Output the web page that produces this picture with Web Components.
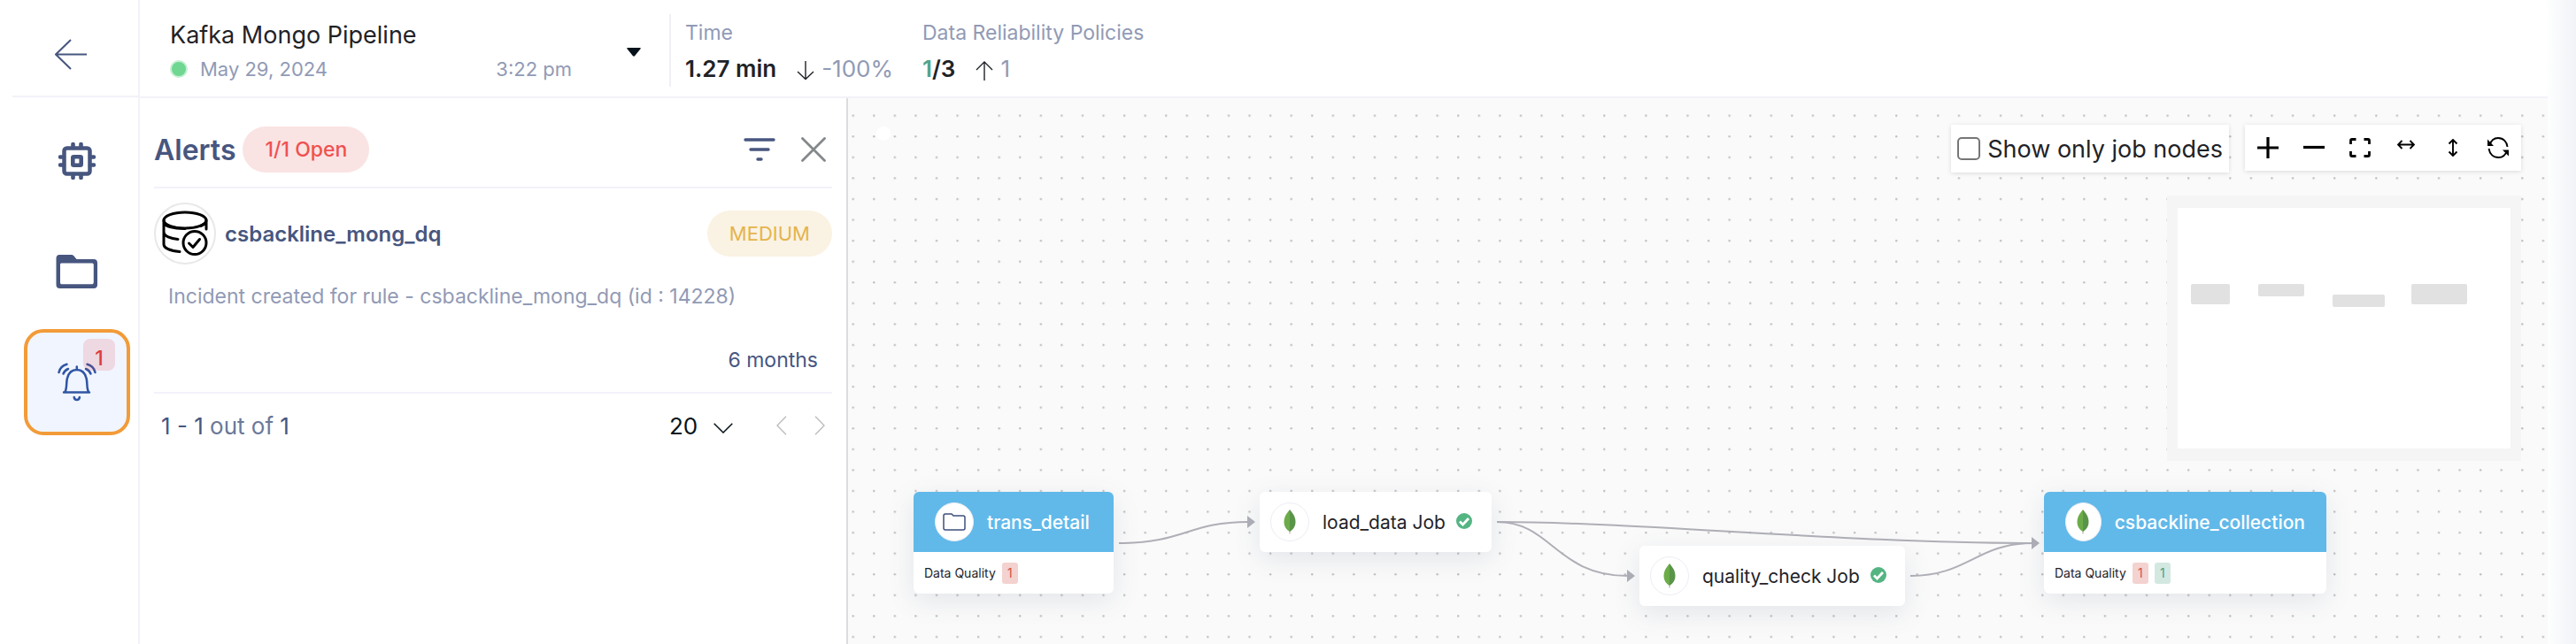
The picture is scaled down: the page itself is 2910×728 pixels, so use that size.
<!DOCTYPE html>
<html lang="en">
<head>
<meta charset="utf-8">
<title>Kafka Mongo Pipeline</title>
<style>
  html, body { margin: 0; }
  body {
    font-family: Inter, "Liberation Sans", sans-serif;
    background: #fff;
    color: #1f2328;
    --ink: #47567f;
    --muted: #919ab5;
    --line: #f2f2f9;
  }
</style>
</head>
<body>
<app-shell>
  <side-rail slot="rail">
    <rail-item icon="chip" label="Compute"></rail-item>
    <rail-item icon="folder" label="Assets"></rail-item>
    <rail-item icon="bell" label="Alerts" count="1" active></rail-item>
  </side-rail>
  <run-header slot="header">
    <metric-stat label="Time" trend="down" delta="-100%">1.27 min</metric-stat>
    <metric-stat label="Data Reliability Policies" trend="up" delta="1"><span style="color:#4fa58c">1</span>/3</metric-stat>
  </run-header>
  <alerts-panel slot="panel">
    <alert-card name="csbackline_mong_dq" level="MEDIUM" age="6 months">Incident created for rule - csbackline_mong_dq (id : 14228)</alert-card>
  </alerts-panel>
  <flow-canvas slot="canvas">
    <flow-node x="74" y="445" w="226" kind="data" icon="folderline" name="trans_detail" failed="1"></flow-node>
    <flow-node x="465" y="445" w="262" kind="job" icon="leaf" name="load_data Job"></flow-node>
    <flow-node x="894" y="506" w="300" kind="job" icon="leaf" name="quality_check Job"></flow-node>
    <flow-node x="1351" y="445" w="319" kind="data" icon="leaf" name="csbackline_collection" failed="1" passed="1"></flow-node>
  </flow-canvas>
</app-shell>

<script>
const ICONS = {
  back: [36, 36, '<path d="M36 17.5H1M18 1 1 17.5 18 34" fill="none" stroke="#47567f" stroke-width="2"/>'],
  chip: [42, 42, '<g fill="none" stroke="#47567f"><rect x="6.500" y="6.500" width="29" height="29" rx="3" stroke-width="4.500"/><path d="M16.500 2v4M25.500 2v4M16.500 36v4M25.500 36v4M2 16.500h4M2 25.500h4M36 16.500h4M36 25.500h4" stroke-width="4.600" stroke-linecap="round"/><rect x="16.300" y="16.300" width="9.400" height="9.400" rx="1" stroke-width="4.600"/></g>'],
  folder: [48, 38, '<path fill="#47567f" fill-rule="evenodd" d="M4 0h13c2 0 3 .600 4 2l2.500 3H43c2.500 0 4 1.500 4 4v25c0 2.500-1.500 4-4 4H4.500C2 38 .500 36.500.500 34V4C.500 1.500 2 0 4 0zM7 9.500c-1.500 0-2 .500-2 2V31c0 1.500.500 2.300 2 2.300h33.500c1.500 0 2.300-.800 2.300-2.300V11.500c0-1.500-.800-2-2.300-2z"/>'],
  bell: [44, 44, '<g fill="none" stroke="#2f55a4" stroke-width="2.500" stroke-linecap="round"><path d="M7 33.500h29M8.500 33C11 28 9.500 22 11 17.500 12.500 11.500 16.500 8 21.800 8S31 11.500 32.500 17.500C34 22 32.500 28 35 33M21.800 4.500V8M18.700 39c.500 4 5.700 4 6.200 0"/><path d="M1.500 11C2.500 6.500 6 3 10.500 1.800M6.500 12.500C7.500 9.800 9.500 8 12 7M42.500 11C41.500 6.500 38 3 33.500 1.800M37.500 12.500C36.500 9.800 34.500 8 32 7"/></g>'],
  caret: [16, 10, '<path d="M1 0h14c1 0 1 .800.500 1.300L9 9.300c-.500.600-1.500.600-2 0L.500 1.300C0 .800 0 0 1 0z" fill="#07131a"/>'],
  down: [20, 22, '<path d="M10 0v20M1 12l9 8.500L19 12" fill="none" stroke="#1f2328" stroke-width="1.400"/>'],
  up: [20, 22, '<path d="M10 22V1M1 10l9-9 9 9" fill="none" stroke="#1f2328" stroke-width="1.400"/>'],
  filter: [36, 26, '<path d="M2 2h32M8 13h20M16 24h4" fill="none" stroke="#47567f" stroke-width="3.400" stroke-linecap="round"/>'],
  close: [28, 28, '<path d="M1.500 1.500l25 25M26.500 1.500l-25 25" fill="none" stroke="#84888a" stroke-width="2.800" stroke-linecap="round"/>'],
  dbcheck: [52, 52, '<g fill="none" stroke="#000" stroke-width="3" stroke-linecap="round" stroke-linejoin="round"><ellipse cx="26" cy="11" rx="24" ry="9"/><path d="M2 11v27c0 4.500 8 7.500 18 8.500M2 13c0 5 11 7.500 24 7.500M2 24c0 5 8 8 16 8.500M50 11v10M43.500 17.500c3-1 5.500-3 6.500-5"/><circle cx="37" cy="36.500" r="13"/><path d="M30.500 37l4.500 4.500 7.500-9"/></g>'],
  chevdown: [22, 12, '<path d="M.700.700 11 11 21.300.700" fill="none" stroke="#07131a" stroke-width="1.500"/>'],
  prev: [12, 22, '<path d="M11 .700 1 11l10 10.300" fill="none" stroke="#bdbdbd" stroke-width="1.400"/>'],
  next: [12, 22, '<path d="M1 .700 11 11 1 21.300" fill="none" stroke="#bdbdbd" stroke-width="1.400"/>'],
  plus: [24, 24, '<path d="M12 0v24M0 12h24" stroke="#000" stroke-width="3.200"/>'],
  minus: [24, 24, '<path d="M0 11.500h24" stroke="#000" stroke-width="3.200"/>'],
  fit: [24, 22, '<path d="M7.500 1.500H3C2 1.500 1.500 2 1.500 3v4M16.500 1.500H21c1 0 1.500.500 1.500 1.500v4M7.500 20.500H3c-1 0-1.500-.500-1.500-1.500v-4M16.500 20.500H21c1 0 1.500-.500 1.500-1.500v-4" fill="none" stroke="#000" stroke-width="2.800"/>'],
  horiz: [20, 20, '<path d="M1 6.500h18M5.500 2 1 6.500 5.500 11M14.500 2 19 6.500 14.500 11" fill="none" stroke="#000" stroke-width="1.900"/>'],
  vert: [20, 20, '<path d="M11 1v18M6.500 5.500 11 1l4.500 4.500M6.500 14.500 11 19l4.500-4.500" fill="none" stroke="#000" stroke-width="1.900"/>'],
  refresh: [24, 24, '<path d="M2.500 9C4 4 7.500 1 12 1c6 0 10 4.500 10.500 10M22 15.500C20.500 20 17 23 12.500 23 6.500 23 2.500 19 1.500 13" fill="none" stroke="#000" stroke-width="1.900"/><path d="M0 2.500V10h7zM24 21.500V14.500h-7z"/>'],
  folderline: [26, 20, '<path d="M1 17V3c0-1.200.800-2 2-2h7l2 2h11c1.200 0 2 .800 2 2v12c0 1.200-.800 2-2 2H3c-1.200 0-2-.800-2-2z" fill="none" stroke="#3f4f7c" stroke-width="1.500"/>'],
  leaf: [14, 28, '<path d="M7 22v5.500" stroke="#b9b39a" stroke-width="1.200"/><path d="M7 0C4 4 .500 7.500.500 14c0 5 2.500 8.500 6.500 11z" fill="#6cac48"/><path d="M7 0c3 4 6.500 7.500 6.500 14 0 5-2.500 8.500-6.500 11z" fill="#599449"/>'],
  ok: [18, 18, '<circle cx="9" cy="9" r="9" fill="#54b583"/><path d="M4 9.500l3.500 3.500L14 6" fill="none" stroke="#fff" stroke-width="2.800"/>']
};

// Registers an element whose open shadow root is rendered from its attributes.
function element(tag, css, html, ready) {
  customElements.define(tag, class extends HTMLElement {
    constructor() { super(); this.attachShadow({ mode: 'open' }); }
    connectedCallback() {
      const attr = n => this.getAttribute(n) || '';
      this.shadowRoot.innerHTML = `<style>*{box-sizing:border-box}button{font:inherit;border:0;background:none;padding:0;display:flex;cursor:pointer}${css}</style>${html(attr, this)}`;
      if (ready) ready(this, attr);
    }
  });
}

element('ui-icon', ':host{display:inline-flex;flex:none}svg{display:block}', a => {
  const [w, h, body] = ICONS[a('name')];
  return `<svg width="${w}" height="${h}" viewBox="0 0 ${w} ${h}" aria-hidden="true">${body}</svg>`;
});

element('app-shell', `
  :host{display:grid;grid-template-columns:144px 800px minmax(0,1fr);grid-template-rows:auto 1fr;min-height:100vh;padding:0 32px 0 14px;box-sizing:border-box;background:linear-gradient(to left,#f1f3f7,#fdfefe) right/32px 100% no-repeat #fff}
  .rail{grid-row:1/3;display:grid}.head{grid-column:2/4}.panel,.canvas{display:grid}`,
  () => `<div class="rail"><slot name="rail"></slot></div><div class="head"><slot name="header"></slot></div>
  <div class="panel"><slot name="panel"></slot></div><div class="canvas"><slot name="canvas"></slot></div>`);

element('side-rail', `
  :host{display:block;border-right:2px solid var(--line)}
  .back{display:flex;align-items:center;justify-content:center;height:110px;border-bottom:2px solid var(--line);padding:16px 10px 0 0}
  nav{display:flex;flex-direction:column;gap:5px;align-items:center;padding:12px 0 0 4px}`,
  () => `<div class="back"><button aria-label="Back"><ui-icon name="back"></ui-icon></button></div><nav><slot></slot></nav>`);

element('rail-item', `
  :host{display:block;position:relative}
  button{width:120px;height:120px;align-items:center;justify-content:center;border-radius:22px}
  :host([active]) button{border:4px solid #f29b38;background:#f0f5ff}
  span{position:absolute;right:17px;top:11px;width:36px;height:36px;border-radius:8px;background:rgba(232,70,70,.16);color:#dc3d3d;font-size:23px;font-weight:500;line-height:44px;text-align:center}`,
  a => `<button aria-label="${a('label')}"><ui-icon name="${a('icon')}"></ui-icon></button>${a('count') ? `<span>${a('count')}</span>` : ''}`);

element('run-header', `
  :host{display:flex;height:111px;box-sizing:border-box;border-bottom:2px solid var(--line);padding-left:34px}
  .pick{display:flex;align-items:center;justify-content:space-between;width:532px;margin-top:21px;height:76px}
  .run{width:454px}
  h1{margin:0;font-size:27px;font-weight:400;line-height:38px}
  .when{display:flex;align-items:center;font-size:22px;line-height:38px;color:var(--muted)}
  i{width:20px;height:20px;border-radius:50%;background:#6fd791;border:2px solid #c5efd3;margin-right:14px}
  .when time:last-child{margin-left:auto}
  .stats{display:flex;margin:16px 0 0 32px;height:82px;padding-left:16px;border-left:2px solid #f0f0f4}`,
  () => `<div class="pick"><div class="run"><h1>Kafka Mongo Pipeline</h1><div class="when"><i></i><time>May 29, 2024</time><time>3:22 pm</time></div></div>
  <button aria-label="Choose run"><ui-icon name="caret"></ui-icon></button></div><div class="stats"><slot></slot></div>`);

element('metric-stat', `
  :host{display:block;min-width:268px}
  .label{font-size:23px;line-height:42px;color:var(--muted)}
  .value{display:flex;align-items:center;font-size:26px;line-height:40px;font-weight:600}
  ui-icon{margin:4px 8px 0 23px}
  .delta{font-weight:400;color:var(--muted)}`,
  a => `<div class="label">${a('label')}</div><div class="value"><span><slot></slot></span><ui-icon name="${a('trend')}"></ui-icon><span class="delta">${a('delta')}</span></div>`);

element('alerts-panel', `
  :host{display:block;padding:0 16px;border-right:2px solid #dcdcde;background:#fff}
  header{display:flex;align-items:center;height:102px;padding:16px 7px 0 0;border-bottom:2px solid var(--line)}
  h2{margin:0 8px 0 0;font-size:32px;font-weight:600;color:var(--ink)}
  .open{padding:0 25px;border-radius:26px;background:#fae3e3;color:#ef5150;font-size:23px;font-weight:500;line-height:52px}
  .tools{display:flex;align-items:center;gap:29px;margin-left:auto}
  footer{display:flex;align-items:center;height:72px;padding:0 8px 0 8px;font-size:26px;color:var(--ink)}
  footer b{font-weight:400}footer span{color:#6b7898}
  .size{display:grid;align-items:center;margin-left:auto;margin-right:49px;width:72px}
  .size *{grid-area:1/1}
  select{appearance:none;border:0;background:none;font:inherit;color:#07131a;padding:0;width:72px}
  .size ui-icon{justify-self:end;pointer-events:none;padding-top:6px}
  .pages{display:flex;gap:31px}`,
  () => `<header><h2>Alerts</h2><span class="open">1/1 Open</span><div class="tools"><button aria-label="Filter"><ui-icon name="filter"></ui-icon></button><button aria-label="Close"><ui-icon name="close"></ui-icon></button></div></header>
  <slot></slot>
  <footer><div><b>1 - 1</b> <span>out of</span> <b>1</b></div><div class="size"><select aria-label="Rows per page"><option>20</option></select><ui-icon name="chevdown"></ui-icon></div>
  <div class="pages"><button aria-label="Previous page"><ui-icon name="prev"></ui-icon></button><button aria-label="Next page"><ui-icon name="next"></ui-icon></button></div></footer>`);

element('alert-card', `
  :host{display:block;padding:16px 0;border-bottom:2px solid var(--line)}
  .top{display:flex;align-items:center;gap:10px}
  .pic{display:flex;align-items:center;justify-content:center;width:70px;height:70px;border:2px solid #e8e8e8;border-radius:50%}
  h3{margin:0;font-size:24px;font-weight:600;color:var(--ink)}
  .level{margin-left:auto;padding:0 25px;border-radius:26px;background:#faf2e2;color:#e4b44c;font-size:22px;font-weight:400;line-height:52px}
  p{margin:16px 16px 0;font-size:23px;line-height:40px;color:var(--muted)}
  .age{margin:32px 16px 0;text-align:right;font-size:23px;line-height:40px;color:var(--ink)}`,
  a => `<div class="top"><span class="pic"><ui-icon name="dbcheck"></ui-icon></span><h3>${a('name')}</h3><span class="level">${a('level')}</span></div><p><slot></slot></p><div class="age">${a('age')}</div>`);

element('flow-canvas', `
  :host{display:block;position:relative;overflow:hidden;background:#fafafa;min-height:617px}
  .grid{position:absolute;inset:0;width:100%;height:100%}
  .edges{position:absolute;left:0;top:0}
  .handle{position:absolute;left:32px;top:32px;width:16px;height:16px;border-radius:50%;background:#fff}
  .bar{position:absolute;top:30px;right:30px;display:flex;align-items:flex-start;gap:18px}
  label,.zoom{display:flex;align-items:center;background:#fff;box-shadow:0 1px 5px rgba(0,0,0,.13)}
  label{height:54px;padding:0 7px;gap:8px;font-size:27px;white-space:nowrap}
  input{appearance:none;width:26px;height:26px;margin:0;border:2px solid #767676;border-radius:5px;background:#fff}
  .zoom button{width:52px;height:52px;align-items:center;justify-content:center}
  mini-map{position:absolute;top:110px;right:30px}`,
  () => `<svg class="grid" aria-hidden="true"><defs><pattern id="dots" x="4.500" y="18.500" width="23.570" height="23.570" patternUnits="userSpaceOnUse"><circle cx="1.200" cy="1.200" r="1.200" fill="#bdbdc0"/></pattern></defs><rect width="100%" height="100%" fill="url(#dots)"/></svg>
  <span class="handle"></span>
  <svg class="edges" width="1400" height="617" aria-hidden="true"><g fill="none" stroke="#afafb7" stroke-width="2"><path d="M306 503C380 503 385 479 452 479"/><path d="M733 479C890 479 1130 503 1338 503"/><path d="M733 479C795 479 800 540 881 540"/><path d="M1200 540C1265 540 1275 503 1338 503"/></g><path d="M451 472l9 7-9 7zM880 533l9 7-9 7zM1337 496l9 7-9 7z" fill="#afafb7"/></svg>
  <slot></slot>
  <div class="bar"><label><input type="checkbox">Show only job nodes</label><div class="zoom">${[['plus', 'Zoom in'], ['minus', 'Zoom out'], ['fit', 'Fit'], ['horiz', 'Horizontal layout'], ['vert', 'Vertical layout'], ['refresh', 'Refresh']].map(([n, l]) => `<button aria-label="${l}"><ui-icon name="${n}"></ui-icon></button>`).join('')}</div></div>
  <mini-map></mini-map>`);

element('mini-map', ':host{display:block;padding:14px 12px;width:400px;height:300px;box-sizing:border-box;background:#f5f5f5}svg{display:block;width:100%;height:100%;background:#fff}',
  () => `<svg viewBox="0 0 376 272" aria-hidden="true"><g fill="#e1e1e1"><rect x="15" y="86" width="44" height="23" rx="2"/><rect x="91" y="86" width="52" height="14" rx="2"/><rect x="175" y="98" width="59" height="14" rx="2"/><rect x="264" y="86" width="63" height="23" rx="2"/></g></svg>`);

element('flow-node', `
  :host{display:block;position:absolute;border-radius:6px;overflow:hidden;background:#fff;box-shadow:0 8px 30px rgba(70,90,120,.13)}
  .head{display:flex;align-items:center;height:68px;padding:0 12px;font-size:21px;white-space:nowrap}
  .pic{display:flex;align-items:center;justify-content:center;width:44px;height:44px;margin-right:15px;border:1px solid #ededf5;border-radius:50%;background:#fff}
  :host([kind=data]) .head{padding:0 24px;background:#61b9e9;color:#fff;font-weight:500}
  .ok{margin:0 0 2px 12px}
  .foot{display:flex;align-items:center;gap:7px;height:47px;padding:0 12px;font-size:14px}
  .foot b{width:18px;border-radius:3px;line-height:24px;text-align:center;font-weight:400}
  .bad{background:#f3d2d0;color:#cf5148}.good{background:#d2e8e1;color:#4a9f83}`,
  a => `<div class="head"><span class="pic"><ui-icon name="${a('icon')}"></ui-icon></span><span>${a('name')}</span>${a('kind') === 'job' ? '<ui-icon class="ok" name="ok"></ui-icon>' : ''}</div>
  ${a('kind') === 'data' ? `<div class="foot"><span>Data Quality</span>${a('failed') ? `<b class="bad">${a('failed')}</b>` : ''}${a('passed') ? `<b class="good">${a('passed')}</b>` : ''}</div>` : ''}`,
  (el, a) => { el.style.left = a('x') + 'px'; el.style.top = a('y') + 'px'; el.style.width = a('w') + 'px'; });
</script>
</body>
</html>
